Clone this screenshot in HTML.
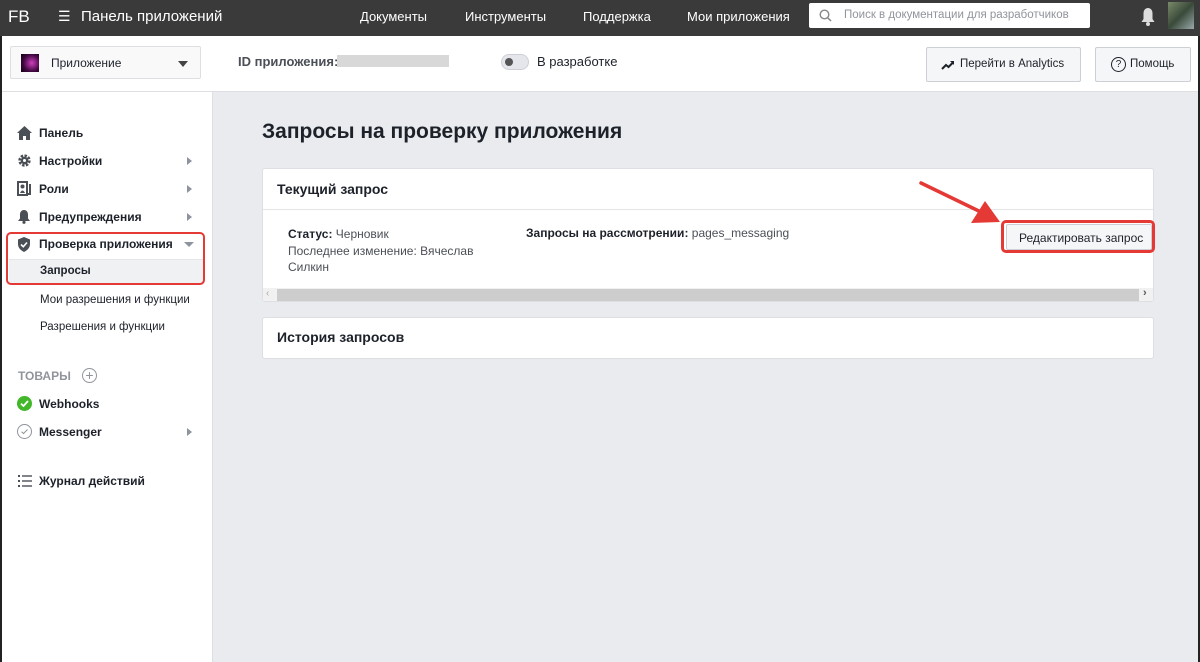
<!DOCTYPE html>
<html><head><meta charset="utf-8"><style>
*{box-sizing:border-box;margin:0;padding:0}
body{width:1200px;height:662px;overflow:hidden;font-family:"Liberation Sans",Arial,sans-serif;background:#e9ebee;position:relative;color:#1d2129}
.abs{position:absolute}
.top{left:0;top:0;width:1200px;height:36px;background:#3a3a3a;color:#fff}
.top span{position:absolute;top:9px;font-size:13px}
.sub{left:0;top:36px;width:1200px;height:56px;background:#fff;border-bottom:1px solid #dddfe2}
.side{left:0;top:92px;width:213px;height:570px;background:#fff;border-right:1px solid #dddfe2}
.item{position:absolute;left:39px;font-size:12px;font-weight:bold;color:#1d2129}
.subi{position:absolute;left:40px;font-size:11.5px;color:#1d2129}
.tri{position:absolute;left:187px;width:0;height:0;border-top:4px solid transparent;border-bottom:4px solid transparent;border-left:5px solid #8d949e}
.card{background:#fff;border:1px solid #dddfe2;border-radius:3px}
.btn{background:#f5f6f7;border:1px solid #ccd0d5;border-radius:2px;font-size:12px;color:#4b4f56}
</style></head><body>
<div class="abs top">
<span style="left:8px;top:7px;font-size:17px">FB</span>
<span style="left:58px;top:8px;font-size:14px">☰</span>
<span style="left:81px;top:8px;font-size:15px">Панель приложений</span>
<span style="left:360px">Документы</span>
<span style="left:465px">Инструменты</span>
<span style="left:583px">Поддержка</span>
<span style="left:687px">Мои приложения</span>
<div class="abs" style="left:809px;top:3px;width:281px;height:25px;background:#fff;border-radius:2px">
<svg class="abs" style="left:10px;top:6px" width="13" height="13" viewBox="0 0 13 13"><circle cx="5.5" cy="5.5" r="4.3" fill="none" stroke="#888" stroke-width="1.4"/><path d="M8.6 8.6L12 12" stroke="#888" stroke-width="1.5"/></svg>
<span style="left:35px;top:6px;color:#90949c;font-size:11.5px">Поиск в документации для разработчиков</span></div>
<svg class="abs" style="left:1140px;top:7px" width="16" height="19" viewBox="0 0 16 19"><path d="M8 1C5 1 3.5 3.5 3.5 6.5V12L1.5 15H14.5L12.5 12V6.5C12.5 3.5 11 1 8 1Z" fill="#ddd"/><circle cx="8" cy="17" r="2" fill="#ddd"/></svg>
<div class="abs" style="left:1168px;top:2px;width:26px;height:27px;background:linear-gradient(135deg,#7a8a6a,#3a4a3a 50%,#9aa);"></div>
</div>
<div class="abs" style="left:0;top:36px;width:2px;height:626px;background:#222;z-index:5"></div>
<div class="abs" style="left:1198px;top:36px;width:2px;height:626px;background:#222;z-index:5"></div>
<div class="abs sub">
<div class="abs" style="left:10px;top:10px;width:191px;height:33px;border:1px solid #dddfe2;border-radius:2px;background:#f9f9fa">
<div class="abs" style="left:10px;top:7px;width:18px;height:18px;background:radial-gradient(circle at 60% 50%,#d040c0,#400840 60%,#100010)"></div>
<span class="abs" style="left:40px;top:9px;font-size:12px">Приложение</span>
<div class="abs" style="left:167px;top:14px;border-left:5px solid transparent;border-right:5px solid transparent;border-top:6px solid #444"></div></div>
<span class="abs" style="left:238px;top:18px;font-size:13px;font-weight:bold;color:#4b4f56">ID приложения:</span>
<div class="abs" style="left:337px;top:19px;width:112px;height:12px;background:#d8d8d8"></div>
<div class="abs" style="left:501px;top:18px;width:28px;height:16px;border-radius:8px;background:#e4e6eb;border:1px solid #ccd0d5"><div class="abs" style="left:3px;top:3px;width:8px;height:8px;border-radius:50%;background:#555"></div></div>
<span class="abs" style="left:537px;top:18px;font-size:13px;color:#1d2129">В разработке</span>
<div class="abs btn" style="left:926px;top:11px;width:155px;height:35px"><span class="abs" style="left:33px;top:10px;font-size:11.5px;color:#1d2129">Перейти в Analytics</span>
<svg class="abs" style="left:14px;top:12px" width="14" height="10" viewBox="0 0 14 10"><path d="M1 9L5 5L7.5 7L12 2.5" fill="none" stroke="#1d2129" stroke-width="2"/><path d="M9 1H13V5Z" fill="#1d2129"/></svg></div>
<div class="abs btn" style="left:1095px;top:11px;width:96px;height:35px"><span class="abs" style="left:34px;top:10px;font-size:11.5px;color:#1d2129">Помощь</span>
<div class="abs" style="left:15px;top:9px;width:15px;height:15px;border:1.3px solid #1d2129;border-radius:50%;font-size:10px;text-align:center;line-height:13px;color:#1d2129">?</div></div>
</div>
<div class="abs side">
<svg class="abs" style="left:17px;top:34px" width="15" height="14" viewBox="0 0 15 14"><path d="M7.5 0L0 7H2V14H6V10H9V14H13V7H15Z" fill="#4b4f56"/></svg>
<span class="item" style="top:34px">Панель</span><span class="item" style="top:62px">Настройки</span><div class="tri" style="top:65px"></div>
<svg class="abs" style="left:17px;top:61px" width="15" height="15" viewBox="0 0 16 16"><circle cx="8" cy="8" r="5" fill="none" stroke="#4b4f56" stroke-width="3.2" stroke-dasharray="2.5 1.4"/><circle cx="8" cy="8" r="4" fill="#4b4f56"/><circle cx="8" cy="8" r="1.6" fill="#fff"/></svg>
<svg class="abs" style="left:17px;top:89px" width="16" height="15" viewBox="0 0 16 15"><path d="M1 1H10V14H1Z" fill="none" stroke="#4b4f56" stroke-width="2"/><circle cx="5.5" cy="5.5" r="2" fill="#4b4f56"/><path d="M3 12Q5.5 7 8 12" fill="#4b4f56"/><path d="M13 3V13H11" fill="none" stroke="#4b4f56" stroke-width="2"/></svg>
<span class="item" style="top:90px">Роли</span><div class="tri" style="top:93px"></div>
<svg class="abs" style="left:17px;top:117px" width="14" height="15" viewBox="0 0 14 15"><path d="M7 1C4.5 1 3 3 3 5.5V9.5L1 12H13L11 9.5V5.5C11 3 9.5 1 7 1Z" fill="#4b4f56"/><circle cx="7" cy="13.3" r="1.6" fill="#4b4f56"/></svg>
<span class="item" style="top:118px">Предупреждения</span><div class="tri" style="top:121px"></div>
<div class="abs" style="left:9px;top:167px;width:194px;height:26px;background:#f0f1f3;border-top:1px solid #e5e6e8"></div>
<svg class="abs" style="left:17px;top:145px" width="14" height="15" viewBox="0 0 14 15"><path d="M7 0L13 2.5V7C13 11 10 13.5 7 15C4 13.5 1 11 1 7V2.5Z" fill="#4b4f56"/><path d="M4 7.5L6.3 9.7L10 5.5" fill="none" stroke="#fff" stroke-width="1.6"/></svg>
<span class="item" style="top:145px">Проверка приложения</span>
<div class="abs" style="left:184px;top:150px;border-left:5px solid transparent;border-right:5px solid transparent;border-top:5px solid #8d949e"></div>
<div class="abs" style="left:6px;top:140px;width:199px;height:53px;border:2.5px solid #e53935;border-radius:5px"></div>
<span class="subi" style="top:173px;font-weight:bold">Запросы</span>
<span class="subi" style="top:202px">Мои разрешения и функции</span>
<span class="subi" style="top:229px">Разрешения и функции</span>
<span class="abs" style="left:18px;top:277px;font-size:12px;font-weight:bold;color:#90949c">ТОВАРЫ</span>
<div class="abs" style="left:82px;top:276px;width:15px;height:15px;border:1.3px solid #90949c;border-radius:50%;text-align:center;line-height:12px;font-size:14px;color:#90949c">+</div>
<div class="abs" style="left:17px;top:304px;width:15px;height:15px;border-radius:50%;background:#42b72a"></div>
<svg class="abs" style="left:17px;top:304px" width="15" height="15" viewBox="0 0 15 15"><path d="M4 7.7L6.5 10L11 5" fill="none" stroke="#fff" stroke-width="1.8"/></svg>
<span class="item" style="top:305px">Webhooks</span>
<div class="abs" style="left:17px;top:332px;width:15px;height:15px;border-radius:50%;border:1px solid #90949c"></div>
<svg class="abs" style="left:17px;top:332px" width="15" height="15" viewBox="0 0 15 15"><path d="M4.5 7.7L6.5 9.5L10.5 5.5" fill="none" stroke="#90949c" stroke-width="1"/></svg>
<span class="item" style="top:333px">Messenger</span><div class="tri" style="top:336px"></div>
<svg class="abs" style="left:18px;top:383px" width="14" height="12" viewBox="0 0 14 12"><g fill="#4b4f56"><rect x="0" y="0" width="2" height="2"/><rect x="0" y="5" width="2" height="2"/><rect x="0" y="10" width="2" height="2"/><rect x="4" y="0.3" width="10" height="1.4"/><rect x="4" y="5.3" width="10" height="1.4"/><rect x="4" y="10.3" width="10" height="1.4"/></g></svg>
<span class="item" style="top:382px">Журнал действий</span>
</div>
<div class="abs" style="left:262px;top:120px;font-size:21px;font-weight:bold;color:#1d2129">Запросы на проверку приложения</div>
<div class="abs card" style="left:262px;top:168px;width:892px;height:134px;overflow:hidden">
<div class="abs" style="left:0;top:0;width:892px;height:41px;border-bottom:1px solid #e5e5e5"><span class="abs" style="left:14px;top:12px;font-size:14px;font-weight:bold">Текущий запрос</span></div>
<div class="abs" style="left:25px;top:57px;font-size:12px;line-height:16.5px;color:#4b4f56"><b style="color:#1d2129">Статус:</b> Черновик<br>Последнее изменение: Вячеслав<br>Силкин</div>
<div class="abs" style="left:263px;top:57px;font-size:12px;color:#4b4f56"><b style="color:#1d2129">Запросы на рассмотрении:</b> pages_messaging</div>
<div class="abs" style="left:0;top:119px;width:892px;height:14px;background:#f1f1f1"><div class="abs" style="left:14px;top:1px;width:862px;height:12px;background:#cdcdcd"></div>
<span class="abs" style="left:3px;top:0;font-size:10px;color:#aaa">‹</span><span class="abs" style="left:880px;top:-1px;font-size:11px;color:#555;font-weight:bold">›</span></div>
</div>
<div class="abs card" style="left:262px;top:317px;width:892px;height:42px"><span class="abs" style="left:14px;top:11px;font-size:14px;font-weight:bold">История запросов</span></div>
<div class="abs btn" style="left:1006px;top:224px;width:146px;height:26px;color:#1d2129"><span class="abs" style="left:12px;top:6px;font-size:12px">Редактировать запрос</span></div>
<div class="abs" style="left:1001px;top:220px;width:154px;height:33px;border:3px solid #e53935;border-radius:5px"></div>
<svg class="abs" style="left:915px;top:178px" width="90" height="50" viewBox="0 0 90 50"><path d="M6 5L70 36" stroke="#e53935" stroke-width="3.5" stroke-linecap="round"/><path d="M85 44L56 45L70 23Z" fill="#e53935"/></svg>
</body></html>
